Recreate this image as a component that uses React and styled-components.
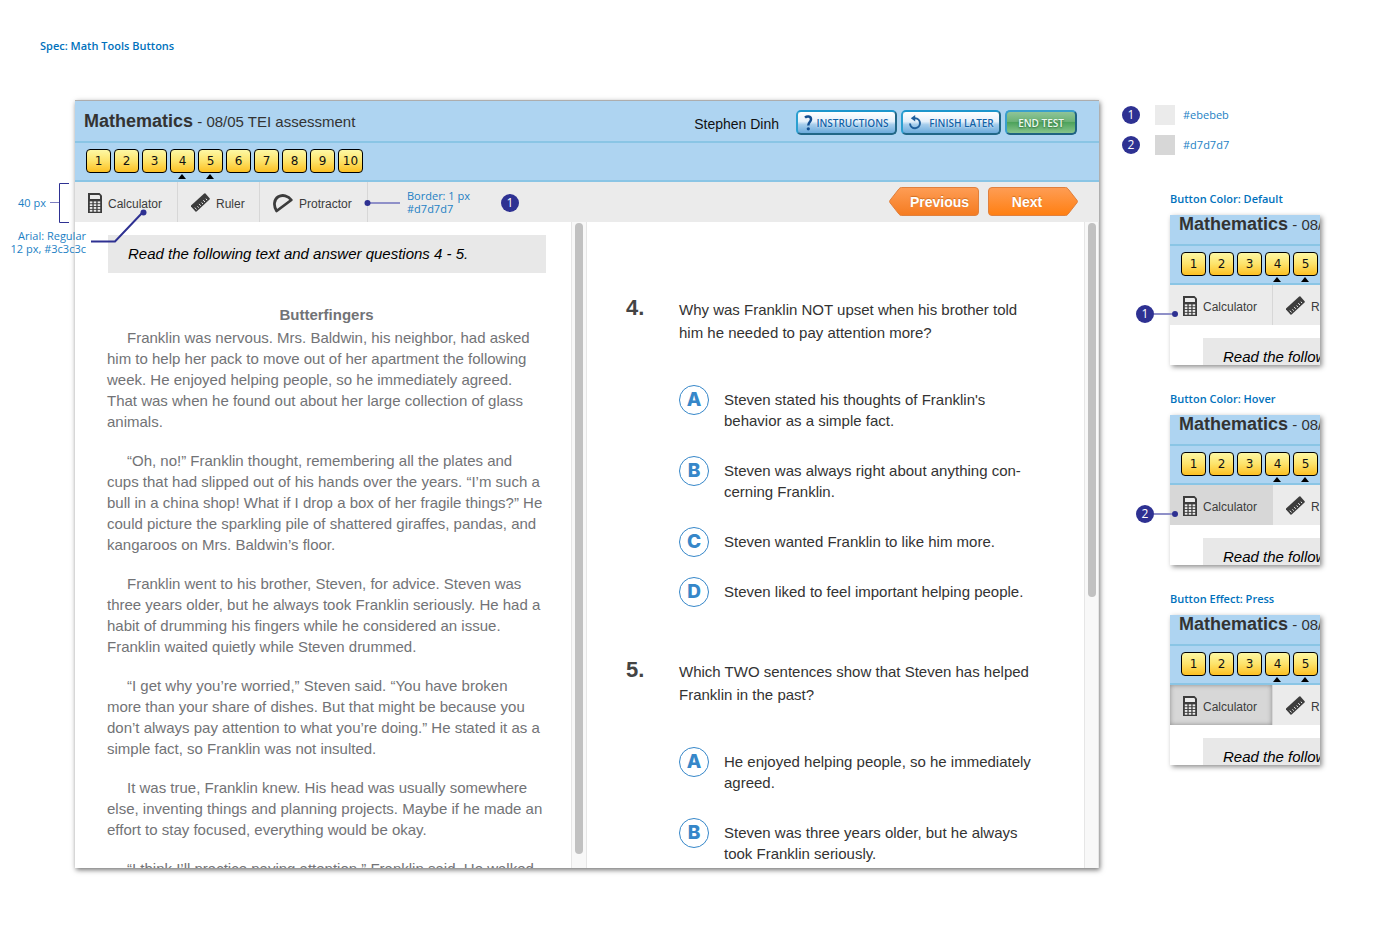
import React from "react";
import styled, { createGlobalStyle, css } from "styled-components";

const arial = `"Liberation Sans", Arial, sans-serif`;
const note = `"Open Sans", "Noto Sans", sans-serif`;

const GlobalStyle = createGlobalStyle`
  *, *::before, *::after { box-sizing: border-box; }
  body { margin: 0; background: #fff; font-family: ${arial}; }
  h1, h2, h3, p, ul, ol { margin: 0; padding: 0; }
  button { margin: 0; font-family: inherit; cursor: pointer; }
`;

const Page = styled.div`
  display: grid;
  grid-template-columns: 75px minmax(0, 1fr) 301px;
  grid-template-rows: 100px auto;
  padding-bottom: 80px;
`;

const SpecTitle = styled.h1`
  grid-column: 1 / -1;
  padding: 37px 40px 0;
  font: 600 11px/18px ${note};
  color: #0071bc;
`;

const Stage = styled.main`
  grid-column: 2;
  position: relative;
`;

const Window = styled.section`
  background: #fff;
  box-shadow: 1px 2px 5px rgba(0, 0, 0, 0.55);
`;

const HeaderBar = styled.header`
  display: flex;
  align-items: center;
  justify-content: space-between;
  height: 43px;
  padding: 0 22px 0 9px;
  border-top: 1px solid #adadad;
  border-bottom: 2px solid #8ac5e5;
  background: #aed4f1;
  white-space: nowrap;
`;

const TestName = styled.h2`
  font-size: 15px;
  line-height: 20px;
  font-weight: 400;
  color: #333;
  strong { font-size: 18px; font-weight: 700; }
`;

const HeaderActions = styled.div`
  display: flex;
  align-items: center;
  gap: 4px;
  padding-top: 3px;
`;

const UserName = styled.span`
  margin-right: 13px;
  padding-top: 2px;
  font-size: 14px;
  color: #111;
`;

const GlossButton = styled.button`
  display: flex;
  align-items: center;
  justify-content: center;
  gap: ${(p) => p.$gap || 3}px;
  width: ${(p) => p.$width}px;
  height: 25px;
  padding: 0;
  border: 2px solid;
  border-radius: 5px;
  font: 600 10px/16px ${note};
  white-space: nowrap;
  ${(p) =>
    p.$green
      ? css`
          border-color: #3a9fcd #1f6382 #1f6382 #3a9fcd;
          background: linear-gradient(#8fc498 0, #6db377 45%, #4ea35c 50%, #86c48c 100%);
          color: #eefaf0;
          text-shadow: 0 1px 2px rgba(0, 60, 20, 0.6);
        `
      : css`
          border-color: #1d96cc #216787 #216787 #2b9fd0;
          background: linear-gradient(#fff 0, #e4f0fa 45%, #a5cdec 60%, #6cabdc 100%);
          color: #1263a8;
          text-shadow: 0 0 2px #fff;
        `}
`;

const QuestionNav = styled.nav`
  display: flex;
  gap: 3px;
  height: 39px;
  padding: 6px 11px 0;
  border-bottom: 2px solid #8ac5e5;
  background: #aed4f1;
`;

const NavButton = styled.button`
  position: relative;
  flex: none;
  width: 25px;
  height: 24px;
  padding: 0;
  border: 1px solid #000;
  border-radius: 4px;
  background: linear-gradient(#fdf8a4, #fde36a 50%, #fdc022);
  font: 12px/20px "DejaVu Sans", sans-serif;
  color: #111;
  ${(p) =>
    p.$marked &&
    css`
      &::after {
        content: "";
        position: absolute;
        top: 24px;
        left: 7px;
        border: 4px solid transparent;
        border-top: 0;
        border-bottom: 5px solid #000;
      }
    `}
`;

const Toolbar = styled.div`
  display: flex;
  align-items: center;
  height: 40px;
  padding-right: 21px;
  background: #ebebeb;
`;

const ToolButton = styled.button`
  display: flex;
  flex: none;
  align-items: center;
  gap: 6px;
  width: ${(p) => p.$width}px;
  height: 40px;
  padding: 2px 0 0 13px;
  border: 0;
  border-right: 1px solid #d7d7d7;
  background: ${(p) => (p.$state ? "#d7d7d7" : "#ebebeb")};
  box-shadow: ${(p) => (p.$state === "press" ? "inset 0 0 5px rgba(0, 0, 0, 0.35)" : "none")};
  font-size: 12px;
  line-height: 16px;
  color: #3c3c3c;
  span { padding-top: 2px; }
  &:hover { background: #d7d7d7; }
  &:active { background: #d7d7d7; box-shadow: inset 0 0 5px rgba(0, 0, 0, 0.35); }
`;

const Pager = styled.div`
  display: flex;
  gap: 9px;
  margin-left: auto;
  padding-bottom: 1px;
`;

const PagerButton = styled.button`
  position: relative;
  width: 90px;
  height: 29px;
  padding: ${(p) => (p.$back ? "0 0 0 11px" : "0 12px 0 0")};
  border: 0;
  background: none;
  font-size: 14px;
  font-weight: 700;
  color: #fff;
  text-shadow: 0 -1px 1px rgba(150, 70, 0, 0.45);
  svg { position: absolute; inset: 0; }
  span { position: relative; }
`;

const Panes = styled.div`
  display: grid;
  grid-template-columns: minmax(0, 1fr) minmax(0, 1fr);
  height: calc(100vh - 304px);
  min-height: 400px;
`;

const Pane = styled.div`
  display: flex;
  min-width: 0;
  min-height: 0;
`;

const PaneContent = styled.div`
  flex: 1;
  min-width: 0;
  overflow: hidden;
  padding: ${(p) => p.$padding};
`;

const ScrollTrack = styled.div`
  flex: none;
  width: ${(p) => p.$width}px;
  padding: 1px 3px;
  border: solid #e6e6e6;
  border-width: 0 1px;
  background: #f8f8f8;
`;

const ScrollThumb = styled.div`
  width: 8px;
  height: ${(p) => p.$size};
  border-radius: 4px;
  background: #c1c1c1;
`;

const Directions = styled.p`
  margin: 0 0 0 1px;
  padding: 9px 20px;
  background: #e8e8e8;
  font-size: 15px;
  line-height: 20px;
  font-style: italic;
  color: #000;
  white-space: nowrap;
`;

const Passage = styled.article`
  padding-top: 31px;
  font-size: 15px;
  line-height: 21px;
  color: #727376;
  h3 { margin-bottom: 2px; font-size: 15px; text-align: center; }
  p { margin-bottom: 18px; padding-right: 2px; text-indent: 20px; }
`;

const Question = styled.section`
  display: grid;
  grid-template-columns: 53px minmax(0, 356px);
  margin-bottom: 53px;
`;

const QuestionNumber = styled.span`
  font-size: 22px;
  line-height: 20px;
  font-weight: 700;
  color: #444;
`;

const Prompt = styled.h3`
  font-size: 15px;
  line-height: 23px;
  font-weight: 400;
  color: #333;
`;

const Options = styled.div`
  grid-column: 2;
  display: grid;
  gap: 20px;
  padding-top: 41px;
`;

const Option = styled.label`
  position: relative;
  display: flex;
  align-items: flex-start;
  gap: 15px;
  width: 355px;
  cursor: pointer;
  input { position: absolute; opacity: 0; }
`;

const Letter = styled.span`
  display: grid;
  place-items: center;
  flex: none;
  width: 30px;
  height: 30px;
  border: 1px solid #3687c9;
  border-radius: 50%;
  font: 800 19px/20px Inter, ${arial};
  color: #3687c9;
`;

const OptionText = styled.span`
  padding: 4px 0 5px;
  font-size: 15px;
  line-height: 21px;
  color: #333;
`;

const Side = styled.aside`
  grid-column: 3;
  padding-left: 23px;
`;

const Swatches = styled.ul`
  display: grid;
  gap: 10px;
  padding-top: 5px;
  list-style: none;
`;

const SwatchRow = styled.li`
  display: flex;
  align-items: center;
  height: 20px;
  font: 11px/20px ${note};
  color: #1c7fc4;
`;

const Swatch = styled.span`
  width: 20px;
  height: 20px;
  margin: 0 8px 0 15px;
  background: ${(p) => p.$color};
`;

const Bullet = styled.span`
  display: grid;
  place-items: center;
  flex: none;
  width: 18px;
  height: 18px;
  border-radius: 50%;
  background: #2e3192;
  font: 12px/18px ${note};
  color: #fff;
`;

const States = styled.div`
  display: grid;
  gap: 25px;
  padding: 35px 0 0 48px;
`;

const StateTitle = styled.h2`
  margin-bottom: 7px;
  font: 600 11px/18px ${note};
  color: #0071bc;
`;

const StateBlock = styled.section`
  position: relative;
`;

const Preview = styled.div`
  width: 150px;
  height: 150px;
  overflow: hidden;
  background: #fff;
  box-shadow: 2px 2px 5px rgba(0, 0, 0, 0.45);
`;

const PreviewContent = styled.div`
  width: 186px;
  margin-top: -12px;
`;

const PreviewBody = styled.div`
  padding: 13px 0 0 32px;
`;

const Callout = styled.div`
  position: absolute;
  top: 115px;
  left: -34px;
  display: flex;
  align-items: center;
`;

const CalloutLine = styled.span`
  width: 18px;
  height: 2px;
  background: #8f90c8;
`;

const CalloutDot = styled.span`
  width: 6px;
  height: 6px;
  border-radius: 50%;
  background: #2e3192;
`;

const Note = styled.p`
  position: absolute;
  top: ${(p) => p.$top}px;
  left: ${(p) => p.$left}px;
  width: ${(p) => p.$width}px;
  text-align: ${(p) => p.$align || "left"};
  font: 11px/13px ${note};
  color: #1c7fc4;
  white-space: nowrap;
`;

const Leaders = styled.svg`
  position: absolute;
  top: 80px;
  left: -30px;
  pointer-events: none;
`;

const ToolbarBullet = styled(Bullet)`
  position: absolute;
  top: 94px;
  left: 426px;
`;

function CalculatorIcon() {
  return (
    <svg width="14" height="20" viewBox="0 0 14 20" aria-hidden="true">
      <path fill="#3c3c3c" d="M0 0h11.500l2.500 2.500V20H0z" />
      <path fill="#ebebeb" d="M2 2h9.200l.8.9V6H2z" />
      {[8.4, 11.2, 14, 16.8].map((y) =>
        [1.8, 5.7, 9.6].map((x) => (
          <rect key={`${x}-${y}`} x={x} y={y} width="2.6" height="1.9" fill="#ebebeb" />
        ))
      )}
    </svg>
  );
}

function RulerIcon() {
  return (
    <svg width="19" height="20" viewBox="0 0 19 20" aria-hidden="true">
      <path fill="#3c3c3c" d="M0 12.500 13.200.4l1-.2 4.600 5.200v.8L5.600 18.600l-.9.1L0 13.400z" />
      <path
        stroke="#ebebeb"
        strokeWidth="1"
        fill="none"
        d="M5.500 16.500 3.900 14.600M7.600 14.700 6.500 13.300M9.700 12.800 8.100 10.900M11.800 10.900l-1.100-1.400M13.900 9l-1.600-1.900M16 7.100l-1.100-1.400"
      />
    </svg>
  );
}

function ProtractorIcon() {
  return (
    <svg width="20" height="20" viewBox="0 0 20 20" aria-hidden="true">
      <path
        fill="none"
        stroke="#3c3c3c"
        strokeWidth="2.800"
        strokeLinejoin="round"
        d="M3.600 18C.2 12.500 1 6.500 5.200 3.800 9.500 1.200 15.300 2.600 18.300 7z"
      />
    </svg>
  );
}

function HelpIcon() {
  return (
    <svg width="9" height="16" viewBox="0 0 9 16" aria-hidden="true">
      <path d="M1 2.600C3 .8 7 1 7 4.200 7 7 4.300 7 4.300 10.400" fill="none" stroke="#134f91" strokeWidth="2.500" />
      <circle cx="4.300" cy="13.800" r="1.600" fill="#134f91" />
    </svg>
  );
}

function ReturnIcon() {
  return (
    <svg width="14" height="16" viewBox="0 0 14 16" aria-hidden="true">
      <path d="M2 8.500a5 5 0 1 0 5-5.300H5" fill="none" stroke="#1f5f9c" strokeWidth="2" />
      <path d="M7.200 0v6.400L2.800 3.200z" fill="#1f5f9c" />
    </svg>
  );
}

function ArrowShape({ back }) {
  const id = back ? "pager-back" : "pager-next";
  return (
    <svg width="90" height="29" viewBox="0 0 90 29" aria-hidden="true">
      <defs>
        <linearGradient id={id} x1="0" y1="0" x2="0" y2="1">
          <stop offset="0" stopColor="#fe9d55" />
          <stop offset="1" stopColor={back ? "#f57b20" : "#ff7f11"} />
        </linearGradient>
      </defs>
      <path
        transform={back ? undefined : "matrix(-1 0 0 1 90 0)"}
        d="M12.500.5H86a3.500 3.500 0 0 1 3.500 3.500v21a3.500 3.500 0 0 1-3.500 3.500H12.500q-1.500 0-2.500-1.300L1 15.700q-1-1.200 0-2.400L10 1.800Q11 .5 12.500.5z"
        fill={`url(#${id})`}
        stroke="#e0803d"
      />
    </svg>
  );
}

const tools = [
  { name: "Calculator", width: 103, Icon: CalculatorIcon },
  { name: "Ruler", width: 82, Icon: RulerIcon },
  { name: "Protractor", width: 108, Icon: ProtractorIcon },
];

const paragraphs = [
  "Franklin was nervous. Mrs. Baldwin, his neighbor, had asked him to help her pack to move out of her apartment the following week. He enjoyed helping people, so he immediately agreed. That was when he found out about her large collection of glass animals.",
  "“Oh, no!” Franklin thought, remembering all the plates and cups that had slipped out of his hands over the years. “I’m such a bull in a china shop! What if I drop a box of her fragile things?” He could picture the sparkling pile of shattered giraffes, pandas, and kangaroos on Mrs. Baldwin’s floor.",
  "Franklin went to his brother, Steven, for advice. Steven was three years older, but he always took Franklin seriously. He had a habit of drumming his fingers while he considered an issue. Franklin waited quietly while Steven drummed.",
  "“I get why you’re worried,” Steven said. “You have broken more than your share of dishes. But that might be because you don’t always pay attention to what you’re doing.” He stated it as a simple fact, so Franklin was not insulted.",
  "It was true, Franklin knew. His head was usually somewhere else, inventing things and planning projects. Maybe if he made an effort to stay focused, everything would be okay.",
  "“I think I’ll practice paying attention,” Franklin said. He walked",
];

const questions = [
  {
    number: 4,
    prompt: "Why was Franklin NOT upset when his brother told him he needed to pay attention more?",
    options: [
      "Steven stated his thoughts of Franklin's behavior as a simple fact.",
      "Steven was always right about anything con\u00adcerning Franklin.",
      "Steven wanted Franklin to like him more.",
      "Steven liked to feel important helping people.",
    ],
  },
  {
    number: 5,
    prompt: "Which TWO sentences show that Steven has helped Franklin in the past?",
    options: [
      "He enjoyed helping people, so he immediately agreed.",
      "Steven was three years older, but he always took Franklin seriously.",
    ],
  },
];

function TestHeader({ subtitle, count, children }) {
  return (
    <>
      <HeaderBar>
        <TestName>
          <strong>Mathematics</strong> - {subtitle}
        </TestName>
        {children}
      </HeaderBar>
      <QuestionNav aria-label="Questions">
        {Array.from({ length: count }, (_, i) => i + 1).map((n) => (
          <NavButton key={n} type="button" $marked={n === 4 || n === 5}>
            {n}
          </NavButton>
        ))}
      </QuestionNav>
    </>
  );
}

function Tools({ items = tools, calculatorState }) {
  return items.map(({ name, width, Icon }) => (
    <ToolButton
      key={name}
      type="button"
      $width={width}
      $state={name === "Calculator" ? calculatorState : undefined}
    >
      <Icon />
      <span>{name}</span>
    </ToolButton>
  ));
}

function ButtonState({ title, state, bullet }) {
  return (
    <StateBlock>
      <StateTitle>{title}</StateTitle>
      <Preview>
        <PreviewContent>
          <TestHeader subtitle="08/05" count={5} />
          <Toolbar>
            <Tools items={tools.slice(0, 2)} calculatorState={state} />
          </Toolbar>
          <PreviewBody>
            <Directions>Read the following</Directions>
          </PreviewBody>
        </PreviewContent>
      </Preview>
      {bullet && (
        <Callout>
          <Bullet>{bullet}</Bullet>
          <CalloutLine />
          <CalloutDot />
        </Callout>
      )}
    </StateBlock>
  );
}

export default function App() {
  return (
    <>
      <GlobalStyle />
      <Page>
        <SpecTitle>Spec: Math Tools Buttons</SpecTitle>
        <Stage>
          <Window>
            <TestHeader subtitle="08/05 TEI assessment" count={10}>
              <HeaderActions>
                <UserName>Stephen Dinh</UserName>
                <GlossButton type="button" $width={101}>
                  <HelpIcon />
                  INSTRUCTIONS
                </GlossButton>
                <GlossButton type="button" $width={100} $gap={7}>
                  <ReturnIcon />
                  FINISH LATER
                </GlossButton>
                <GlossButton type="button" $width={72} $green>
                  END TEST
                </GlossButton>
              </HeaderActions>
            </TestHeader>
            <Toolbar>
              <Tools />
              <Pager>
                <PagerButton type="button" $back>
                  <ArrowShape back />
                  <span>Previous</span>
                </PagerButton>
                <PagerButton type="button">
                  <ArrowShape />
                  <span>Next</span>
                </PagerButton>
              </Pager>
            </Toolbar>
            <Panes>
              <Pane>
                <PaneContent $padding="13px 25px 0 32px">
                  <Directions>Read the following text and answer questions 4 - 5.</Directions>
                  <Passage>
                    <h3>Butterfingers</h3>
                    {paragraphs.map((text) => (
                      <p key={text}>{text}</p>
                    ))}
                  </Passage>
                </PaneContent>
                <ScrollTrack $width={16} aria-hidden="true">
                  <ScrollThumb $size="98%" />
                </ScrollTrack>
              </Pane>
              <Pane>
                <PaneContent $padding="76px 0 0 39px">
                  {questions.map((q) => (
                    <Question key={q.number}>
                      <QuestionNumber>{q.number}.</QuestionNumber>
                      <Prompt>{q.prompt}</Prompt>
                      <Options role="radiogroup" aria-label={`Question ${q.number}`}>
                        {q.options.map((text, i) => (
                          <Option key={text}>
                            <input type="radio" name={`question-${q.number}`} />
                            <Letter>{"ABCD"[i]}</Letter>
                            <OptionText>{text}</OptionText>
                          </Option>
                        ))}
                      </Options>
                    </Question>
                  ))}
                </PaneContent>
                <ScrollTrack $width={15} aria-hidden="true">
                  <ScrollThumb $size="58%" />
                </ScrollTrack>
              </Pane>
            </Panes>
          </Window>

          <Leaders width="360" height="80" viewBox="0 0 360 80" aria-hidden="true">
            <g fill="none" stroke="#2e3192">
              <path d="M24 3.500H14.500V42.500H24" />
              <path d="M5 22.500h9" stroke="#7d7fc0" />
              <path d="M46 61.500h24L98 32" strokeWidth="2" />
              <path d="M322 23h33" stroke="#8f90c8" strokeWidth="2" />
            </g>
            <circle cx="98.500" cy="32.500" r="3" fill="#2e3192" />
            <circle cx="322.500" cy="23" r="3" fill="#2e3192" />
          </Leaders>
          <Note $top={96} $left={-69} $width={40} $align="right">
            40 px
          </Note>
          <Note $top={129} $left={-69} $width={80} $align="right">
            Arial: Regular
            <br />
            12 px, #3c3c3c
          </Note>
          <Note $top={89} $left={332} $width={80}>
            Border: 1 px
            <br />
            #d7d7d7
          </Note>
          <ToolbarBullet>1</ToolbarBullet>
        </Stage>

        <Side>
          <Swatches>
            <SwatchRow>
              <Bullet>1</Bullet>
              <Swatch $color="#ebebeb" />
              #ebebeb
            </SwatchRow>
            <SwatchRow>
              <Bullet>2</Bullet>
              <Swatch $color="#d7d7d7" />
              #d7d7d7
            </SwatchRow>
          </Swatches>
          <States>
            <ButtonState title="Button Color: Default" bullet={1} />
            <ButtonState title="Button Color: Hover" state="hover" bullet={2} />
            <ButtonState title="Button Effect: Press" state="press" />
          </States>
        </Side>
      </Page>
    </>
  );
}
